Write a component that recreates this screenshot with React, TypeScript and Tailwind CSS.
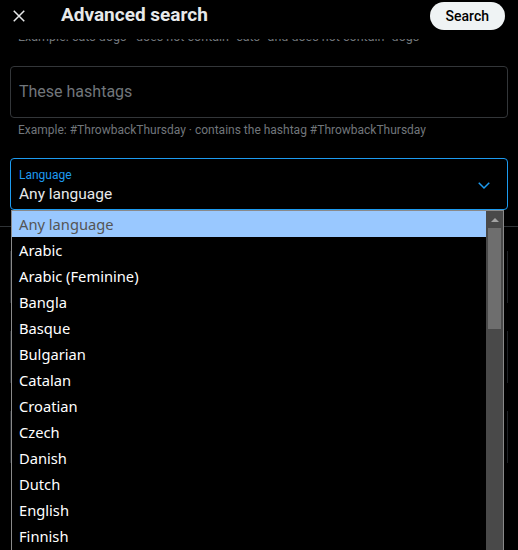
import React from "react";

const languages = [
  "Any language",
  "Arabic",
  "Arabic (Feminine)",
  "Bangla",
  "Basque",
  "Bulgarian",
  "Catalan",
  "Croatian",
  "Czech",
  "Danish",
  "Dutch",
  "English",
  "Finnish",
];

function App() {
  return (
    <div className="relative w-[518px] h-[550px] overflow-hidden bg-black text-[#e7e9ea] font-['Roboto',sans-serif]">
      {/* header */}
      <div className="relative z-10 h-[39px] flex items-start bg-black">
        <button className="ml-[10px] mt-[7px] w-[18px] h-[18px] flex items-center justify-center">
          <svg viewBox="0 0 24 24" className="w-[18px] h-[18px]" fill="none" stroke="#e7e9ea" strokeWidth="2">
            <path d="M5 5l14 14M19 5L5 19" />
          </svg>
        </button>
        <h2 className="ml-[33px] mt-[3px] text-[19px] leading-[24px] font-bold">Advanced search</h2>
        <button className="ml-auto mr-[13px] mt-[2px] h-[28px] px-4 rounded-full bg-[#eff3f4] text-black text-[14px] font-medium">
          Search
        </button>
      </div>

      <div className="px-[10px]">
        <p className="mt-[-11px] pl-2 text-[12.5px] leading-[18px] text-[#71767b] whitespace-nowrap">
          Example: cats dogs · does not contain “cats” and does not contain “dogs”
        </p>

        <div className="mt-[20px] h-[52px] border border-[#333639] rounded-[4px] flex items-center px-2">
          <span className="text-[16px] text-[#71767b]">These hashtags</span>
        </div>
        <p className="mt-[4px] pl-2 text-[12px] leading-[17px] text-[#71767b] whitespace-nowrap">
          Example: #ThrowbackThursday · contains the hashtag #ThrowbackThursday
        </p>

        <div className="mt-[19px] h-[52px] border-[1.5px] border-[#1d9bf0] rounded-[4px] flex items-center pl-[8px] pr-[14px]">
          <div className="flex-1 flex flex-col pt-[3px]">
            <span className="text-[12px] leading-[16px] text-[#1d9bf0]">Language</span>
            <span className="text-[15.5px] leading-[22px] text-[#e7e9ea]">Any language</span>
          </div>
          <svg viewBox="0 0 24 24" className="w-[18px] h-[18px] mt-[2px]" fill="none" stroke="#1d9bf0" strokeWidth="2">
            <path d="M5 9l7 7 7-7" />
          </svg>
        </div>
      </div>

      {/* content behind the open list */}
      <div className="mt-[16px] border-t border-[#2f3336]" />
      <div className="px-[10px] pt-[24px] flex flex-col gap-[28px]">
        <div className="h-[52px] border-l border-r border-[#202327]" />
        <div className="h-[52px] border-l border-r border-[#202327]" />
        <div className="h-[52px] border-l border-r border-[#202327]" />
      </div>

      {/* open select list */}
      <div className="absolute left-[11px] top-[210px] w-[493px] h-[360px] flex border border-[#8a8a8a] bg-black font-['Noto_Sans',sans-serif]">
        <ul className="flex-1 overflow-hidden">
          {languages.map((l, i) => (
            <li
              key={l}
              className={
                i === 0
                  ? "h-[26px] flex items-center pl-[7px] text-[14.7px] bg-[#99c8ff] text-[#555]"
                  : "h-[26px] flex items-center pl-[7px] text-[14.7px] text-white"
              }
            >
              {l}
            </li>
          ))}
        </ul>
        <div className="w-[17px] bg-[#494949] flex flex-col items-center">
          <div className="h-[17px] flex items-center justify-center">
            <div className="w-0 h-0 border-l-[4px] border-r-[4px] border-b-[4px] border-l-transparent border-r-transparent border-b-[#a3a3a3]" />
          </div>
          <div className="w-[13px] h-[101px] bg-[#6e6e6e]" />
        </div>
      </div>
    </div>
  );
}

export default App;
